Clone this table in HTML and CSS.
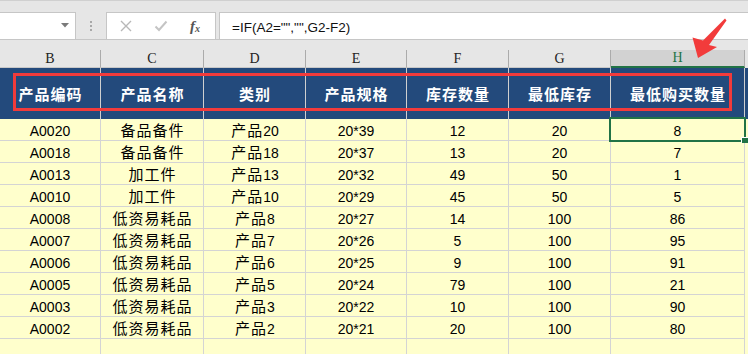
FILE: index.html
```html
<!DOCTYPE html>
<html>
<head>
<meta charset="utf-8">
<link rel="stylesheet" href="styles.css">
</head>
<body>
<div class="app">
  <div class="toolbar">
    <div class="namebox">
      <svg class="dd" width="8" height="5" viewBox="0 0 8 5"><polygon points="0,0 8,0 4,4.5" fill="#7a7a7a"/></svg>
    </div>
    <div class="grip"><i></i><i></i><i></i></div>
    <div class="fbox">
      <svg class="ico" width="14" height="14" viewBox="0 0 14 14"><path d="M2 2 L12 12 M12 2 L2 12" stroke="#b8b8b8" stroke-width="1.4" fill="none"/></svg>
      <svg class="ico" width="14" height="14" viewBox="0 0 14 14"><path d="M1.5 7.5 L5 11 L12.5 2.5" stroke="#c4c4c4" stroke-width="2" fill="none"/></svg>
      <span class="fx">f<sub>x</sub></span>
    </div>
    <div class="finput">=IF(A2="","",G2-F2)</div>
  </div>

  <div class="sheet">
    <div class="row colhead">
      <div class="c">B</div><div class="c">C</div><div class="c">D</div><div class="c">E</div><div class="c">F</div><div class="c">G</div><div class="c sel">H</div><div class="c last"></div>
    </div>
    <div class="row head">
      <div class="c">产品编码</div><div class="c">产品名称</div><div class="c">类别</div><div class="c">产品规格</div><div class="c">库存数量</div><div class="c">最低库存</div><div class="c">最低购买数量</div><div class="c last"></div>
    </div>
    <div class="row data"><div class="c">A0020</div><div class="c zh">备品备件</div><div class="c zh">产品<span class="n">20</span></div><div class="c">20*39</div><div class="c">12</div><div class="c">20</div><div class="c">8</div><div class="c last"></div></div>
    <div class="row data"><div class="c">A0018</div><div class="c zh">备品备件</div><div class="c zh">产品<span class="n">18</span></div><div class="c">20*37</div><div class="c">13</div><div class="c">20</div><div class="c">7</div><div class="c last"></div></div>
    <div class="row data"><div class="c">A0013</div><div class="c zh">加工件</div><div class="c zh">产品<span class="n">13</span></div><div class="c">20*32</div><div class="c">49</div><div class="c">50</div><div class="c">1</div><div class="c last"></div></div>
    <div class="row data"><div class="c">A0010</div><div class="c zh">加工件</div><div class="c zh">产品<span class="n">10</span></div><div class="c">20*29</div><div class="c">45</div><div class="c">50</div><div class="c">5</div><div class="c last"></div></div>
    <div class="row data"><div class="c">A0008</div><div class="c zh">低资易耗品</div><div class="c zh">产品<span class="n">8</span></div><div class="c">20*27</div><div class="c">14</div><div class="c">100</div><div class="c">86</div><div class="c last"></div></div>
    <div class="row data"><div class="c">A0007</div><div class="c zh">低资易耗品</div><div class="c zh">产品<span class="n">7</span></div><div class="c">20*26</div><div class="c">5</div><div class="c">100</div><div class="c">95</div><div class="c last"></div></div>
    <div class="row data"><div class="c">A0006</div><div class="c zh">低资易耗品</div><div class="c zh">产品<span class="n">6</span></div><div class="c">20*25</div><div class="c">9</div><div class="c">100</div><div class="c">91</div><div class="c last"></div></div>
    <div class="row data"><div class="c">A0005</div><div class="c zh">低资易耗品</div><div class="c zh">产品<span class="n">5</span></div><div class="c">20*24</div><div class="c">79</div><div class="c">100</div><div class="c">21</div><div class="c last"></div></div>
    <div class="row data"><div class="c">A0003</div><div class="c zh">低资易耗品</div><div class="c zh">产品<span class="n">3</span></div><div class="c">20*22</div><div class="c">10</div><div class="c">100</div><div class="c">90</div><div class="c last"></div></div>
    <div class="row data"><div class="c">A0002</div><div class="c zh">低资易耗品</div><div class="c zh">产品<span class="n">2</span></div><div class="c">20*21</div><div class="c">20</div><div class="c">100</div><div class="c">80</div><div class="c last"></div></div>
    <div class="row data empty"><div class="c"></div><div class="c"></div><div class="c"></div><div class="c"></div><div class="c"></div><div class="c"></div><div class="c"></div><div class="c last"></div></div>

    <div class="redbox"></div>
    <div class="selbox"><span class="handle"></span></div>
  </div>

  <svg class="arrow" width="60" height="60" viewBox="0 0 60 60">
    <polygon points="18,48 12.5,27.5 23,30.5 45,8.5 46.5,10.5 29,35 37,37" fill="#f23b3b"/>
  </svg>
</div>
</body>
</html>
```

FILE: styles.css
```css
* { box-sizing: border-box; }
html, body { margin: 0; padding: 0; }
body {
  width: 748px;
  height: 354px;
  overflow: hidden;
  background: #e6e6e6;
  font-family: "Liberation Sans", "Noto Sans CJK SC", sans-serif;
}
.app { position: relative; width: 748px; height: 354px; }

.toolbar {
  height: 40px;
  border-top: 1px solid #d0d0d0;
  border-bottom: 1px solid #c6c6c6;
  display: flex;
  align-items: flex-end;
}
.namebox {
  width: 77px;
  height: 27px;
  margin-left: -1px;
  background: #fff;
  border: 1px solid #c6c6c6;
  border-bottom: none;
  display: flex;
  align-items: center;
  justify-content: flex-end;
  padding-right: 6px;
}
.dd { display: block; margin-top: -1px; }
.grip {
  width: 30px;
  height: 27px;
  display: flex;
  flex-direction: column;
  align-items: center;
  justify-content: center;
  gap: 2px;
}
.grip i { display: block; width: 2px; height: 2px; background: #a8a8a8; }
.fbox {
  width: 110px;
  height: 27px;
  background: #fff;
  border: 1px solid #c6c6c6;
  border-bottom: none;
  display: flex;
  align-items: center;
  padding-left: 12px;
  gap: 21px;
}
.ico { display: block; }
.fx {
  font-family: "Liberation Serif", serif;
  font-style: italic;
  font-weight: 700;
  font-size: 15px;
  color: #555;
  margin-left: 1px;
}
.fx sub { font-size: 10px; vertical-align: -1px; }
.finput {
  flex: 1;
  margin-left: 3px;
  height: 27px;
  background: #fff;
  border: 1px solid #c6c6c6;
  border-right: none;
  border-bottom: none;
  font-size: 13.5px;
  color: #111;
  padding-left: 12px;
  display: flex;
  align-items: center;
  padding-top: 2px;
}

.sheet { position: relative; padding-top: 10px; }
.row {
  display: grid;
  grid-template-columns: 101px 103px 102px 101px 102px 102px 134px 3px;
}
.c {
  border-right: 1px solid #d4d4d4;
  display: flex;
  align-items: center;
  justify-content: center;
  white-space: nowrap;
}
.c.last { border-right: none; }

.colhead { height: 18px; }
.colhead .c {
  border-right-color: #ababab;
  border-bottom: 1px solid #c8c8c8;
  font-family: "Liberation Serif", serif;
  font-size: 14px;
  color: #222;
}
.colhead .c.last { border-bottom: none; }
.colhead .c.sel {
  background: #d2d2d2;
  color: #217346;
  border-bottom: 2px solid #217346;
}

.head { height: 51px; background: #234a7c; }
.head .c {
  border-right-color: #cfcfcf;
  color: #fff;
  font-family: "Noto Sans CJK SC", sans-serif;
  font-weight: 700;
  font-size: 15px;
  letter-spacing: 1px;
  padding-left: 1px;
}

.data { height: 22px; background: #ffffcc; }
.data .c {
  border-bottom: 1px solid #d4d4d4;
  font-size: 14px;
  color: #000;
  padding-top: 2px;
}
.data .c.zh {
  font-family: "Noto Sans CJK SC", sans-serif;
  font-size: 15px;
  letter-spacing: 1px;
  padding-left: 1px;
  padding-top: 0;
}
.data .c.zh .n {
  font-family: "Liberation Sans", sans-serif;
  font-size: 14px;
  letter-spacing: 0;
  padding-top: 2px;
}
.data .c.last { border-bottom: none; }
.empty { height: 16px; }
.empty .c { border-bottom: none; }

.redbox {
  position: absolute;
  left: 13px;
  top: 33px;
  width: 719px;
  height: 38px;
  border: 3px solid #f23b3b;
}
.selbox {
  position: absolute;
  left: 609px;
  top: 77px;
  width: 137px;
  height: 25px;
  border: 2px solid #217346;
}
.handle {
  position: absolute;
  right: -4px;
  bottom: -3px;
  width: 6px;
  height: 5px;
  background: #217346;
  border-left: 1px solid #fff;
  border-top: 1px solid #fff;
  box-sizing: content-box;
}
.arrow { position: absolute; left: 680px; top: 10px; }
```
